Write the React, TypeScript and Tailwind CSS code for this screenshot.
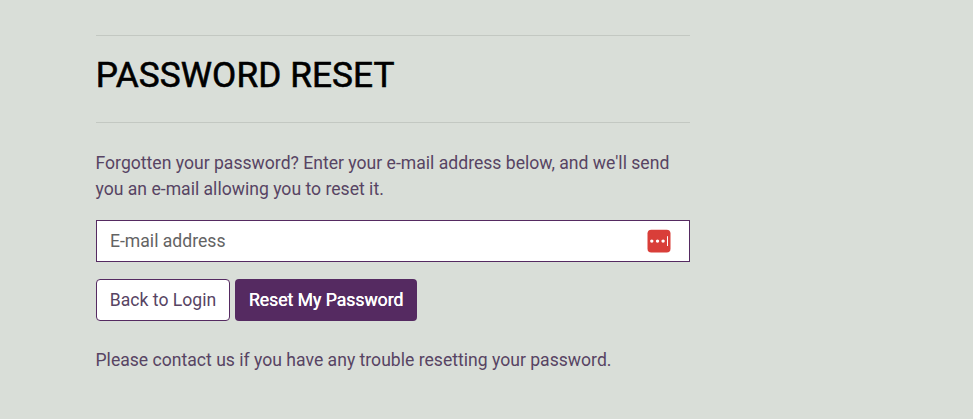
export default function App() {
  return (
    <main className="h-[419px] w-full overflow-hidden bg-[#d9ded8] pl-24 pt-[35px] font-[Roboto,sans-serif] text-[17.6px] leading-[26px] text-[#574463]">
      <div className="w-[594px]">
        <h1 className="flex h-[88px] items-center border-y border-[#c3c8c2] pb-[9px] text-[35.2px] font-normal leading-[42px] tracking-[0.1px] text-black [-webkit-text-stroke:0.6px_#000]"><span className="-ml-[0.2px]">PASSWORD RESET</span></h1>
        <p className="-ml-[0.5px] mt-[27px] h-[52px] whitespace-nowrap">
          Forgotten your password? Enter your e-mail address below, and we'll send
          <br />
          you an e-mail allowing you to reset it.
        </p>
        <form onSubmit={(e) => e.preventDefault()}>
          <div className="mt-[18px] flex h-[42px] items-center border border-[#552a61] bg-white pl-[13px] pr-[18px]">
            <input aria-label="E-mail address" placeholder="E-mail address" className="min-w-0 flex-1 bg-transparent outline-none placeholder:text-[#636363]" />
            <svg width="24" height="24" viewBox="0 0 24 24">
              <rect x="0.5" y="0.7" width="23" height="22.8" rx="3.8" fill="#d93e39" />
              <g fill="white">
                <circle cx="4.8" cy="12.1" r="1.7" />
                <circle cx="10.5" cy="12.1" r="1.7" />
                <circle cx="16.1" cy="12.1" r="1.7" />
                <rect x="20" y="7.2" width="1" height="9.8" />
              </g>
            </svg>
          </div>
          <div className="mt-[17px] flex gap-[5px]">
            <button type="button" className="h-[42px] w-[134px] rounded border border-[#552a61] bg-white">Back to Login</button>
            <button className="h-[42px] w-[182px] rounded bg-[#552a61] text-white [text-shadow:0.4px_0_0_#fff]">Reset My Password</button>
          </div>
        </form>
        <p className="-ml-[0.5px] mt-[26px] whitespace-nowrap">Please contact us if you have any trouble resetting your password.</p>
      </div>
    </main>
  );
}
